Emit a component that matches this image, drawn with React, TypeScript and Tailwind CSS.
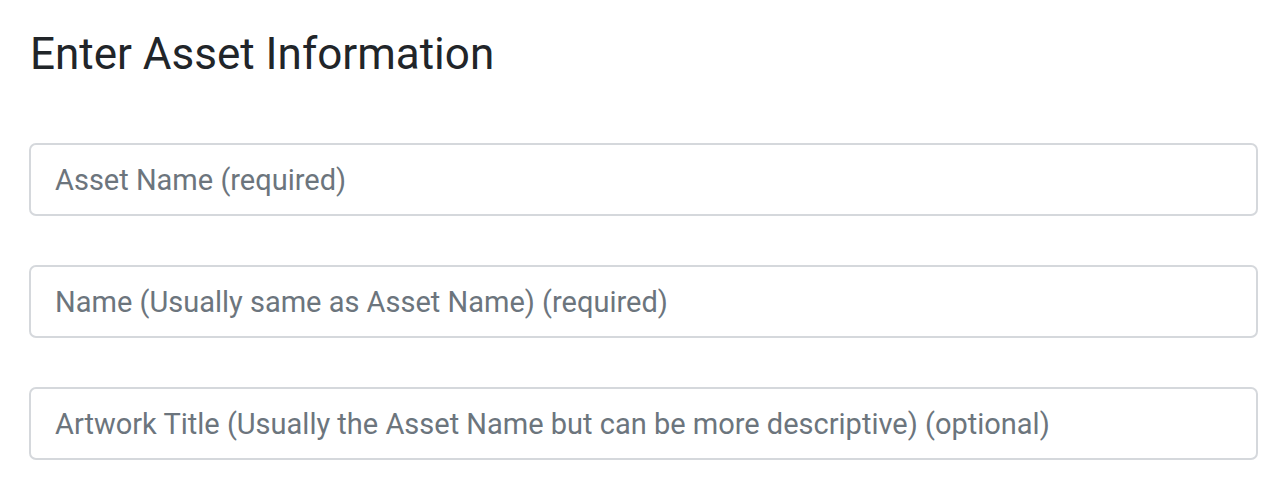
export default function App() {
  const fields = [
    "Asset Name (required)",
    "Name (Usually same as Asset Name) (required)",
    "Artwork Title (Usually the Asset Name but can be more descriptive) (optional)",
  ];
  return (
    <div className="min-h-[489px] bg-white pl-[29px] pr-[22px] pt-[24px] font-['Roboto',sans-serif]">
      <h4 className="pl-[1px] text-[44px] leading-[60px] text-[#212529]">Enter Asset Information</h4>
      <div className="mt-[59px] flex flex-col gap-[49px]">
        {fields.map((f) => (
          <input
            key={f}
            type="text"
            placeholder={f}
            className="h-[73px] w-full rounded-[7px] border-2 border-[#d5d8dc] bg-white px-[24px] pt-[1px] text-[29px] text-[#495057] placeholder:text-[#6c757d] outline-none"
          />
        ))}
      </div>
    </div>
  );
}
